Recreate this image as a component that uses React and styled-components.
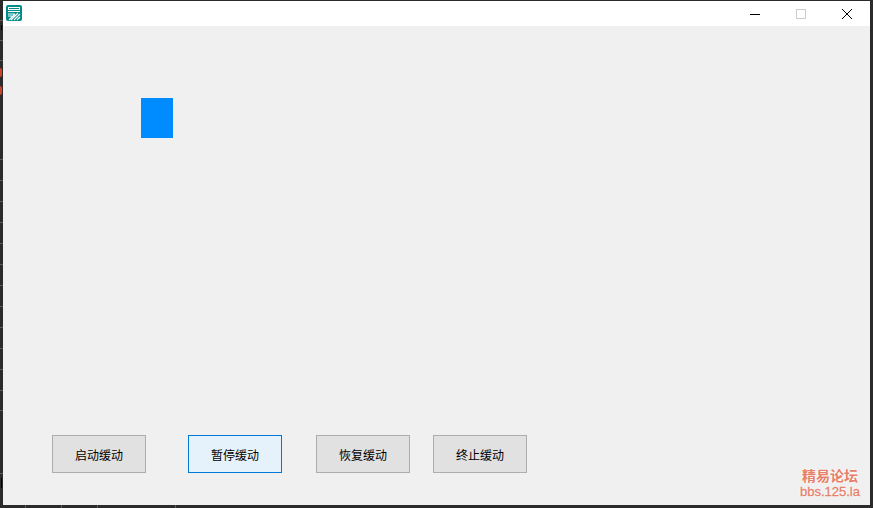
import React from "react";
import styled, { createGlobalStyle } from "styled-components";

const Global = createGlobalStyle`
  html, body { margin: 0; padding: 0; width: 873px; height: 508px; overflow: hidden; background: #2b2b2b; }
  * { box-sizing: border-box; }
`;

const Desktop = styled.div`
  position: relative;
  width: 873px;
  height: 508px;
  padding: 1px 3px 3px 3px;
  background: #2b2b2b;
`;

const SideTick = styled.span`
  position: absolute;
  left: 0;
  top: ${(p) => p.$y}px;
  width: 3px;
  height: 1px;
  background: #5c5c5c;
`;

const BottomTick = styled.span`
  position: absolute;
  bottom: 0;
  left: ${(p) => p.$x}px;
  width: 1px;
  height: 3px;
  background: #5c5c5c;
`;

const EdgeMark = styled.span`
  position: absolute;
  left: 0;
  top: ${(p) => p.$top}px;
  width: 2px;
  height: 9px;
  background: #c8452a;
  border-radius: 0 2px 2px 0;
`;

const EdgeGlyph = styled.span`
  position: absolute;
  left: 1px;
  top: ${(p) => p.$top}px;
  width: 1px;
  height: ${(p) => p.$h}px;
  background: #000;
`;

const Window = styled.div`
  position: relative;
  display: flex;
  flex-direction: column;
  width: 867px;
  height: 504px;
  background: #f0f0f0;
`;

const TitleBar = styled.div`
  display: flex;
  align-items: center;
  justify-content: space-between;
  height: 25px;
  flex: none;
  background: #ffffff;
  padding-left: 3px;
`;

const WindowControls = styled.div`
  display: flex;
  height: 100%;
`;

const ControlSlot = styled.div`
  width: 46px;
  height: 100%;
  display: flex;
  align-items: center;
  justify-content: center;
`;

const Canvas = styled.div`
  position: relative;
  flex: 1;
  display: flex;
  flex-direction: column;
  justify-content: flex-end;
  padding: 0 0 32px 49px;
`;

const Sprite = styled.div`
  position: absolute;
  left: 138px;
  top: 72px;
  width: 32px;
  height: 40px;
  background: #008cff;
`;

const ButtonRow = styled.div`
  display: flex;
`;

const ActionButton = styled.button`
  width: 94px;
  height: 38px;
  margin-right: ${(p) => p.$gap}px;
  padding: 2px 0 0;
  border: 1px solid ${(p) => (p.$focused ? "#0078d7" : "#adadad")};
  background: ${(p) => (p.$focused ? "#e5f1fb" : "#e1e1e1")};
  color: #000;
  font: 400 12px "Noto Sans CJK SC", "Liberation Sans", sans-serif;
  line-height: 16px;
`;

const Watermark = styled.div`
  position: absolute;
  right: 10px;
  bottom: 6px;
  display: flex;
  flex-direction: column;
  align-items: center;
  color: #e5806a;
  text-shadow: 0 0 2px #fff, 0 0 2px #fff;
`;

const WatermarkTitle = styled.div`
  font: 700 14px/16px "Liberation Sans", "Noto Sans CJK SC", sans-serif;
`;

const WatermarkUrl = styled.div`
  font: 400 13px/15px "Liberation Sans", sans-serif;
  -webkit-text-stroke: 0.3px #e5806a;
`;

const AppIcon = () => (
  <svg width="17" height="17" viewBox="0 0 17 17" shapeRendering="crispEdges">
    <rect x="0" y="0" width="16" height="16" rx="2" fill="#008b8b" shapeRendering="auto" />
    <rect x="2" y="2" width="12" height="3" fill="#ffffff" />
    <rect x="3" y="3" width="10" height="1" fill="#008b8b" />
    <rect x="2" y="6" width="12" height="1" fill="#ffffff" />
    <path
      d="M2 9h7M2 11h4M9 9l-6 6M12 8l-7 7M14 9l-6 6M14 12l-3 3"
      stroke="#ffffff"
      strokeWidth="1.1"
      fill="none"
      shapeRendering="auto"
    />
  </svg>
);

const Minimize = () => (
  <svg width="12" height="12" viewBox="0 0 12 12">
    <path d="M1 6.5h10" stroke="#000" strokeWidth="1" />
  </svg>
);

const Maximize = () => (
  <svg width="12" height="12" viewBox="0 0 12 12">
    <rect x="1.5" y="1.5" width="9" height="9" fill="none" stroke="#cccccc" />
  </svg>
);

const Close = () => (
  <svg width="12" height="12" viewBox="0 0 12 12">
    <path d="M1 1l10 10M11 1L1 11" stroke="#000" strokeWidth="1" />
  </svg>
);

const buttons = [
  { label: "启动缓动", gap: 42 },
  { label: "暂停缓动", gap: 34, focused: true },
  { label: "恢复缓动", gap: 23 },
  { label: "终止缓动", gap: 0 },
];

const sideTicks = [20, 40, 60, 159, 180, 201, 222, 243, 264, 285, 306, 327, 348, 369, 390, 410, 473];
const bottomTicks = [25, 61, 97, 175];

export default function App() {
  return (
    <Desktop>
      <Global />
      {sideTicks.map((y) => (
        <SideTick key={y} $y={y} />
      ))}
      {bottomTicks.map((x) => (
        <BottomTick key={x} $x={x} />
      ))}
      <EdgeGlyph $top={25} $h={5} />
      <EdgeGlyph $top={478} $h={10} />
      <EdgeMark $top={68} />
      <EdgeMark $top={86} />
      <Window>
        <TitleBar>
          <AppIcon />
          <WindowControls>
            <ControlSlot><Minimize /></ControlSlot>
            <ControlSlot><Maximize /></ControlSlot>
            <ControlSlot><Close /></ControlSlot>
          </WindowControls>
        </TitleBar>
        <Canvas>
          <Sprite />
          <ButtonRow>
            {buttons.map((b) => (
              <ActionButton key={b.label} $gap={b.gap} $focused={b.focused}>
                {b.label}
              </ActionButton>
            ))}
          </ButtonRow>
          <Watermark>
            <WatermarkTitle>精易论坛</WatermarkTitle>
            <WatermarkUrl>bbs.125.la</WatermarkUrl>
          </Watermark>
        </Canvas>
      </Window>
    </Desktop>
  );
}
